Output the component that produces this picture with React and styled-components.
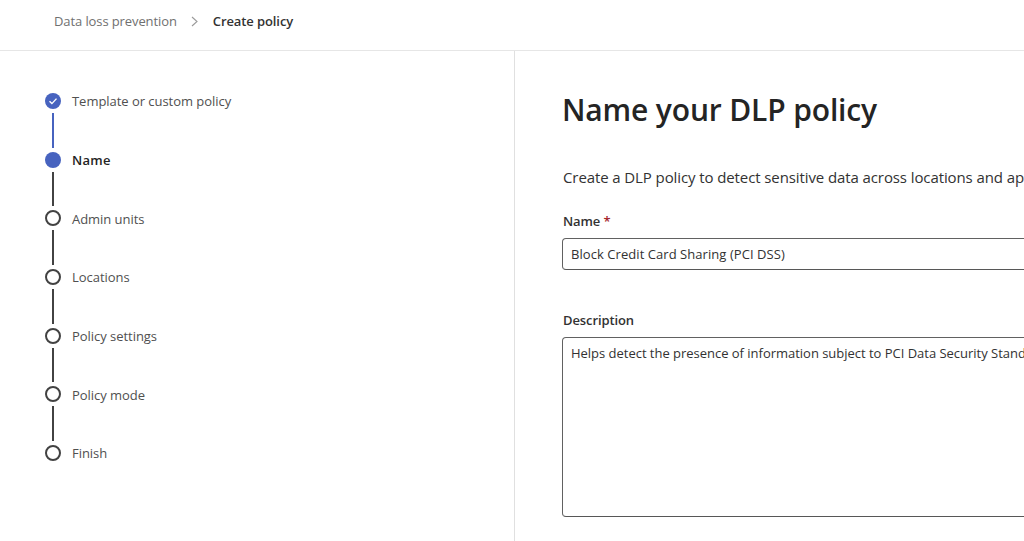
import React from "react";
import styled, { createGlobalStyle } from "styled-components";

const Global = createGlobalStyle`
  html, body { margin: 0; padding: 0; background: #fff; overflow: hidden; }
  body { font-family: "Open Sans", "Noto Sans", "Liberation Sans", sans-serif; color: #242424; }
`;
const Page = styled.div`width: 1024px; height: 541px; overflow: hidden; display: flex; flex-direction: column;`;
const Header = styled.header`
  height: 42px; flex: none; border-bottom: 1px solid #e6e6e6;
  display: flex; align-items: center; padding: 0 0 8px 54px; font-size: 13px; letter-spacing: -0.1px;
`;
const Crumb = styled.span`color: #707070;`;
const CrumbCurrent = styled.span`color: #323232; font-weight: 600;`;
const Chevron = styled.svg`width: 9px; height: 11px; margin: 0 14px 0 13px; fill: none; stroke: #9a9a9a; stroke-width: 1.1;`;
const Body = styled.div`flex: 1; display: flex; min-height: 0;`;
const Side = styled.nav`
  box-sizing: border-box; width: 515px; flex: none; border-right: 1px solid #e0e0e0;
  padding: 42px 0 0 45px;
`;
const Step = styled.div`display: flex; gap: 11px; height: ${p => (p.$last ? "16px" : "58.67px")};`;
const Rail = styled.div`width: 16px; flex: none; display: flex; flex-direction: column; align-items: center;`;
const Dot = styled.div`
  width: 16px; height: 16px; flex: none; border-radius: 50%; box-sizing: border-box;
  display: flex; align-items: center; justify-content: center;
  background: ${p => (p.$state === "todo" ? "#fff" : "#4763bf")};
  border: ${p => (p.$state === "todo" ? "2px solid #424242" : "none")};
`;
const Line = styled.div`
  width: 2px; flex: 1; margin: 4px 0;
  background: ${p => (p.$done ? "#4763bf" : "#424242")};
`;
const Label = styled.div`
  font-size: 13px; line-height: 16px; margin-top: 0.4px;
  letter-spacing: ${p => (p.$active ? "0.3px" : "-0.04px")};
  color: ${p => (p.$active ? "#242424" : "#505050")};
  font-weight: ${p => (p.$active ? 600 : 400)};
`;
const Main = styled.main`padding: 39px 0 0 47px; width: 700px; flex: none;`;
const Title = styled.h1`margin: 0; font-size: 30px; line-height: 40px; font-weight: 600; color: #242424; letter-spacing: -0.15px; white-space: nowrap;`;
const Intro = styled.p`margin: 37px 0 0 1px; font-size: 15px; line-height: 20px; letter-spacing: -0.1px; color: #323232; white-space: nowrap;`;
const FieldLabel = styled.label`display: block; margin-left: 1px; font-size: 13px; line-height: 20px; font-weight: 600; letter-spacing: -0.1px; color: #323232;`;
const Req = styled.span`color: #a4262c;`;
const NameField = styled.div`margin-top: 24px;`;
const Box = styled.div`
  margin-top: 7px; box-sizing: border-box; width: 700px; border: 1px solid #616161; border-bottom-color: #575757; border-radius: 4px;
  padding: ${p => (p.$multi ? "5px 8px" : "0 8px")};
  height: ${p => (p.$multi ? "180px" : "32px")};
  line-height: ${p => (p.$multi ? "20px" : "30px")};
  font-size: 13px; letter-spacing: ${p => (p.$multi ? "-0.02px" : "0.06px")}; color: #323232; white-space: nowrap; overflow: hidden; background: #fff;
`;
const DescField = styled.div`margin-top: 40px;`;

const steps = ["Template or custom policy", "Name", "Admin units", "Locations", "Policy settings", "Policy mode", "Finish"];

export default function App() {
  return (
    <Page>
      <Global />
      <Header>
        <Crumb>Data loss prevention</Crumb>
        <Chevron viewBox="0 0 9 11"><path d="M2 1l5 4.5L2 10" /></Chevron>
        <CrumbCurrent>Create policy</CrumbCurrent>
      </Header>
      <Body>
        <Side>
          {steps.map((s, i) => (
            <Step key={s} $last={i === steps.length - 1}>
              <Rail>
                <Dot $state={i === 0 ? "done" : i === 1 ? "active" : "todo"}>
                  {i === 0 && (
                    <svg width="10" height="10" viewBox="0 0 10 10" fill="none" stroke="#fff" strokeWidth="1.4">
                      <path d="M1.5 5.3l2.4 2.3 4.6-5" />
                    </svg>
                  )}
                </Dot>
                {i < steps.length - 1 && <Line $done={i === 0} />}
              </Rail>
              <Label $active={i === 1}>{s}</Label>
            </Step>
          ))}
        </Side>
        <Main>
          <Title>Name your DLP policy</Title>
          <Intro>Create a DLP policy to detect sensitive data across locations and apps.</Intro>
          <NameField>
            <FieldLabel>Name <Req>*</Req></FieldLabel>
            <Box>Block Credit Card Sharing (PCI DSS)</Box>
          </NameField>
          <DescField>
            <FieldLabel>Description</FieldLabel>
            <Box $multi>Helps detect the presence of information subject to PCI Data Security Standard (PCI DSS) compliance requirements.</Box>
          </DescField>
        </Main>
      </Body>
    </Page>
  );
}
